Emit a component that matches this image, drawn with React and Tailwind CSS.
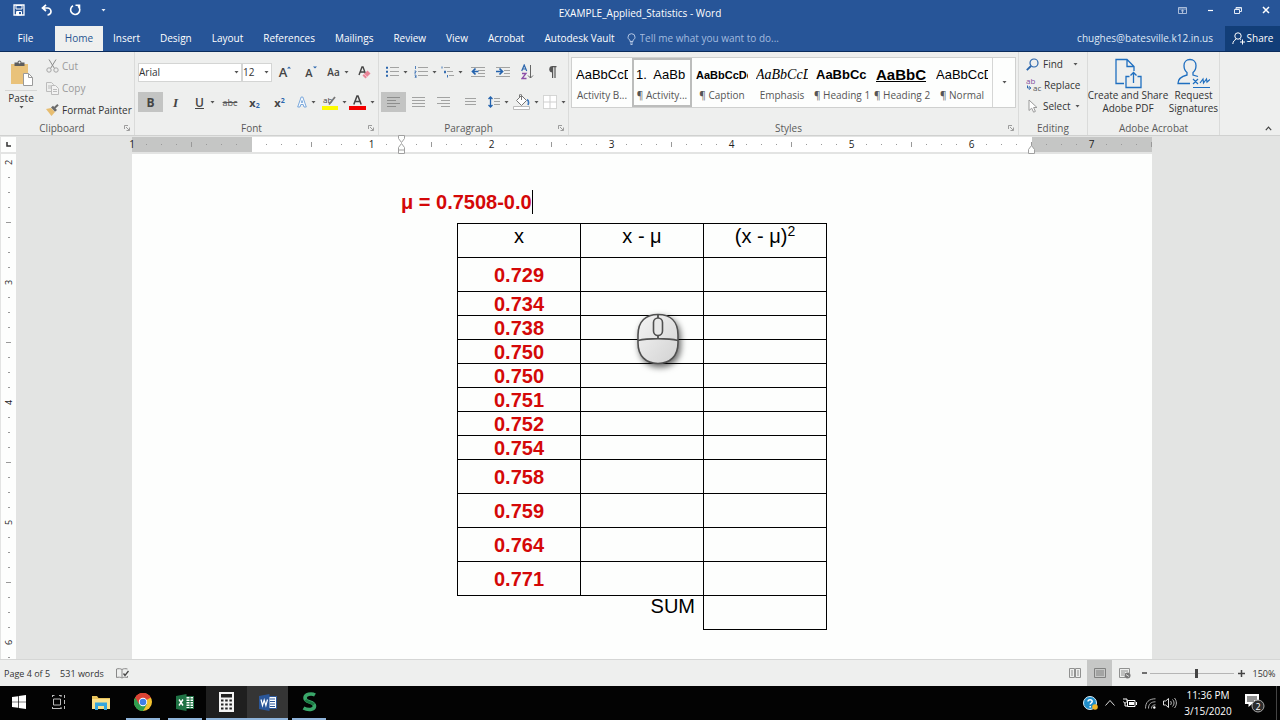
import { useState } from 'react'
import clsx from 'clsx'

const tabs = ['Insert', 'Design', 'Layout', 'References', 'Mailings', 'Review', 'View', 'Acrobat', 'Autodesk Vault']

const styleItems = [
  { name: 'Activity B...', sample: 'AaBbCcDd', cls: 'text-[13px]' },
  { name: '¶ Activity...', sample: '1.  AaBb', cls: 'text-[13px]' },
  { name: '¶ Caption', sample: 'AaBbCcDd', cls: 'text-[11px] font-bold' },
  { name: 'Emphasis', sample: 'AaBbCcDd', cls: "text-[14px] italic font-['Liberation_Serif',serif] text-[#444]" },
  { name: '¶ Heading 1', sample: 'AaBbCc', cls: 'text-[13px] font-bold' },
  { name: '¶ Heading 2', sample: 'AaBbC', cls: 'text-[15px] font-bold underline' },
  { name: '¶ Normal', sample: 'AaBbCcDd', cls: 'text-[13px]' },
]

const rows = [
  { x: '0.729', tall: true },
  { x: '0.734' },
  { x: '0.738' },
  { x: '0.750' },
  { x: '0.750' },
  { x: '0.751' },
  { x: '0.752' },
  { x: '0.754' },
  { x: '0.758', tall: true },
  { x: '0.759', tall: true },
  { x: '0.764', tall: true },
  { x: '0.771', tall: true },
]

function Svg({ w, h, children, className }) {
  return (
    <svg width={w} height={h} viewBox={`0 0 ${w} ${h}`} fill="none" className={clsx('shrink-0', className)} aria-hidden="true">
      {children}
    </svg>
  )
}

function Caret({ color = '#555' }) {
  return <Svg w={5} h={3}><path d="M0.5 0h4L2.5 2.5z" fill={color} /></Svg>
}

function Btn({ label, width = 'w-[25px]', active, caret, children }) {
  return (
    <button type="button" aria-label={label} className={clsx('flex h-5 shrink-0 items-center justify-center gap-1', width, active && 'bg-[#c3c4c3]')}>
      {children}
      {caret && <Caret />}
    </button>
  )
}

function Launcher() {
  return (
    <Svg w={6} h={6}>
      <path d="M0.5 4V0.5H4M2 2l3 3M5.5 2.5v3h-3" stroke="#888" strokeWidth="0.8" />
    </Svg>
  )
}

function Group({ label, width, launcher, children }) {
  return (
    <section aria-label={label} className={clsx('flex shrink-0 flex-col border-r border-[#dadbda]', width)}>
      <div className="flex-1">{children}</div>
      <div className="flex h-3.5 items-center px-1 text-[#5a5a5a]">
        <span className={clsx('flex-1 text-center', launcher && 'pr-1')}>{label}</span>
        {launcher && <Launcher />}
      </div>
    </section>
  )
}

/* horizontal text lines, as used on the list and alignment buttons */
function Lines({ spans, y0 = 1, step = 3, color = '#a2a3a2' }) {
  return (
    <>
      {spans.map(([a, b], i) => (
        <path key={i} d={`M${a} ${y0 + i * step + 0.5}H${b}`} stroke={color} />
      ))}
    </>
  )
}

function TitleBar() {
  return (
    <div className="grid h-[26px] grid-cols-[1fr_auto_1fr] items-center">
      <div className="flex items-center pb-1.5 pl-[5px]">
        <button type="button" aria-label="Save" className="flex w-7 justify-center">
          <Svg w={12} h={12}>
            <path d="M1 1h10v10H1z" stroke="#fff" strokeWidth="1.3" />
            <path d="M3 1.5h6V5H3zM3.5 7.5h5V11h-5z" stroke="#fff" />
            <path d="M4 8h2v3H4z" fill="#fff" />
          </Svg>
        </button>
        <button type="button" aria-label="Undo" className="flex w-7 justify-center">
          <Svg w={12} h={12}>
            <path d="M5 .8L1.500 4l3.500 3M2 4h4.500a3.300 3.300 0 010 7" stroke="#fff" strokeWidth="1.700" />
          </Svg>
        </button>
        <button type="button" aria-label="Repeat" className="flex w-7 justify-center">
          <Svg w={12} h={12}>
            <path d="M4 1.800a4.600 4.600 0 105 .4M6.500 1.200H10.500V5" stroke="#fff" strokeWidth="1.600" />
          </Svg>
        </button>
        <button type="button" aria-label="Customize toolbar" className="flex w-7 justify-center">
          <Caret color="#e8eef8" />
        </button>
      </div>
      <h1 className="text-white">EXAMPLE_Applied_Statistics - Word</h1>
      <div className="flex items-center justify-end pb-1.5">
        <button type="button" aria-label="Ribbon display options" className="flex w-7 justify-center">
          <Svg w={9} h={7}><path d="M.5.5h8v6h-8zM.5 2h8M4.5 6V3M3 4.3L4.5 3 6 4.3" stroke="#c9d6ea" strokeWidth="0.8" /></Svg>
        </button>
        <button type="button" aria-label="Minimize" className="flex w-7 justify-center">
          <Svg w={7} h={4}><path d="M1 2.500h5" stroke="#fff" strokeWidth="1.200" /></Svg>
        </button>
        <button type="button" aria-label="Restore" className="flex w-7 justify-center">
          <Svg w={8} h={7}><path d="M.5 2.500h5v4h-5zM2 2V.5h5.500v4H6M2 1h5" stroke="#e4ebf6" /></Svg>
        </button>
        <button type="button" aria-label="Close" className="flex w-7 justify-center">
          <Svg w={8} h={8}><path d="M1 1l6 6M7 1L1 7" stroke="#fff" strokeWidth="1.500" /></Svg>
        </button>
      </div>
    </div>
  )
}

function TabBar() {
  return (
    <nav className="flex h-[26px] items-stretch border-b border-[#0b2c5c] text-white">
      <button type="button" className="w-[55px] pr-1">File</button>
      <button type="button" className="w-12 bg-[#eff0ef] text-[#27548f]">Home</button>
      <div className="flex">
        {tabs.map((t) => <button key={t} type="button" className="px-2.5">{t}</button>)}
      </div>
      <label className="flex flex-1 items-center gap-1 pl-0.5">
        <Svg w={9} h={12}>
          <path d="M3 8.500V7.200C1.600 6.400 1 5.500 1 4.200a3.500 3.500 0 017 0c0 1.300-.6 2.200-2 3v1.300zM3 10h3M3.500 11.500h2" stroke="#b4c7e4" />
        </Svg>
        <input aria-label="Tell me" placeholder="Tell me what you want to do..." className="w-40 bg-transparent placeholder:text-[#a3bbdf] outline-none" />
      </label>
      <a href="#account" className="flex items-center pr-3 text-[#dfe8f5]">chughes@batesville.k12.in.us</a>
      <button type="button" className="flex w-[55px] items-center justify-center gap-0.5 bg-[#123e78]">
        <Svg w={13} h={13}>
          <circle cx="6" cy="4" r="3.200" stroke="#fff" />
          <path d="M.8 12c.2-2.500 1.600-4 3.400-4.800M7.800 7l1 .8M10.500 7.500v5M8 10h5" stroke="#fff" />
        </Svg>
        Share
      </button>
    </nav>
  )
}

function Clipboard() {
  return (
    <Group label="Clipboard" width="w-[135px]" launcher>
      <div className="flex pt-1">
        <button type="button" className="flex w-[42px] flex-col items-center pt-1">
          <Svg w={23} h={26}>
            <path d="M1 4h17v20H1z" fill="#e9c27a" />
            <path d="M4.500 2.500h3a2 2 0 014 0h3v3.500h-10z" fill="#5d5d5d" />
            <circle cx="9.500" cy="2.500" r="1" fill="#eee" />
            <path d="M13.500 13.500h5l4 4v8h-9z" fill="#fff" stroke="#9a9a9a" />
            <path d="M18.500 13.500v4h4" stroke="#9a9a9a" />
          </Svg>
          <span className="mt-1 w-8 border-t border-[#d5d6d5]">Paste</span>
          <Caret />
        </button>
        <div className="flex flex-col gap-0.5 pl-1">
          <button type="button" className="flex h-5 items-center gap-[3px] text-[#9a9a9a]">
            <Svg w={13} h={14}>
              <path d="M3 .5l5.500 9M10 .5L4.500 9.500" stroke="#8c8c8c" />
              <circle cx="3" cy="11" r="2.200" stroke="#a5a5a5" /><circle cx="10" cy="11" r="2.200" stroke="#a5a5a5" />
            </Svg>
            Cut
          </button>
          <button type="button" className="flex h-5 items-center gap-[3px] text-[#9a9a9a]">
            <Svg w={13} h={13}>
              <path d="M.5.500h5l2 2v7h-7zM2 4h3M2 6h3" stroke="#bcbcbc" />
              <path d="M5.500 3.500h4l3 3v6h-7z" fill="#f3f3f3" stroke="#bcbcbc" />
              <path d="M7 7.500h4M7 9.500h4" stroke="#bcbcbc" />
            </Svg>
            Copy
          </button>
          <button type="button" className="flex h-5 items-center gap-[3px] whitespace-nowrap">
            <Svg w={13} h={12}>
              <path d="M0 5l5-1 4 4-3.500 4z" fill="#e7bd70" />
              <path d="M5 3.500l2-1.800L11 6 9 7.800z" fill="#6a6a6a" />
              <path d="M8.500 4L12 .8" stroke="#6a6a6a" strokeWidth="2" />
            </Svg>
            Format Painter
          </button>
        </div>
      </div>
    </Group>
  )
}

function Combo({ label, value, options, width }) {
  const [v, setV] = useState(value)
  return (
    <div className={clsx('grid h-[19px] items-center border border-[#d4d5d4] bg-white', width)}>
      <select aria-label={label} value={v} onChange={(e) => setV(e.target.value)} className="col-start-1 row-start-1 w-full appearance-none bg-transparent outline-none">
        {options.map((o) => <option key={o}>{o}</option>)}
      </select>
      <span className="pointer-events-none col-start-1 row-start-1 justify-self-end pr-0.5"><Caret /></span>
    </div>
  )
}

function FontGroup() {
  return (
    <Group label="Font" width="w-[244px]" launcher>
      <div className="flex items-center pt-2.5 pl-[3px]">
        <Combo label="Font" value="Arial" options={['Arial', 'Calibri', 'Times New Roman']} width="w-[104px]" />
        <Combo label="Font size" value="12" options={['10', '11', '12', '14']} width="w-[30px]" />
        <Btn label="Grow font" width="w-[26px]">
          <span className="text-[13px] font-semibold text-[#444]">A</span>
          <Svg w={4} h={12} className="-ml-1"><path d="M0 2.500L2 .5l2 2z" fill="#2b66ad" /></Svg>
        </Btn>
        <Btn label="Shrink font" width="w-[26px]">
          <span className="text-[11px] font-semibold text-[#444]">A</span>
          <Svg w={4} h={12} className="-ml-1"><path d="M0 .5h4L2 2.500z" fill="#2b66ad" /></Svg>
        </Btn>
        <Btn label="Change case" width="w-7" caret><span className="font-semibold text-[#444]">Aa</span></Btn>
        <Btn label="Clear formatting">
          <Svg w={13} h={13}>
            <path d="M1 9L4 1h1l3 8M2 6h5" stroke="#444" strokeWidth="1.400" />
            <path d="M9.500 4.500l3 3-5 5-3-3z" fill="#ea8598" />
            <path d="M6.200 8l3 3" stroke="#f7c9d1" />
          </Svg>
        </Btn>
      </div>
      <div className="flex items-center pt-2.5 pl-[3px]">
        <Btn label="Bold" active><span className="text-[12px] font-bold text-[#444]">B</span></Btn>
        <Btn label="Italic"><span className="font-['Liberation_Serif',serif] text-[13px] font-bold italic text-[#444]">I</span></Btn>
        <Btn label="Underline" width="w-[30px]" caret><span className="pl-1 pr-0.5 text-[12px] font-semibold text-[#444] underline">U</span></Btn>
        <Btn label="Strikethrough" width="w-6"><span className="text-[9px] text-[#555] line-through">abc</span></Btn>
        <Btn label="Subscript"><span className="text-[11px] font-bold text-[#444]">x<sub className="text-[7px] text-[#2b66ad]">2</sub></span></Btn>
        <Btn label="Superscript"><span className="text-[11px] font-bold text-[#444]">x<sup className="text-[7px] text-[#2b66ad]">2</sup></span></Btn>
        <Btn label="Text effects" width="w-7" caret>
          <Svg w={10} h={12}><path d="M.7 11L4.200 1h1.600l3.500 10H7L6.200 8.500H3.800L3 11zM4.400 6.500h1.200L5 4.500z" stroke="#6d9fd8" strokeWidth="0.900" fill="#f7fbff" /></Svg>
        </Btn>
        <Btn label="Highlight color" width="w-7" caret>
          <Svg w={16} h={16}>
            <text x="1" y="9" fontSize="8" fill="#444">ab</text>
            <path d="M13 3L7 10.500" stroke="#777" strokeWidth="1.800" />
            <path d="M0 12h16v4H0z" fill="#fdfb00" />
          </Svg>
        </Btn>
        <Btn label="Font color" width="w-7" caret>
          <Svg w={17} h={16}>
            <path d="M4.800 10.500L8 2h1l3.200 8.500M6 7.500h5" stroke="#444" strokeWidth="1.500" />
            <path d="M0 12h17v4H0z" fill="#f40000" />
          </Svg>
        </Btn>
      </div>
    </Group>
  )
}

function ParagraphGroup() {
  const full = [[0, 13], [0, 13], [0, 13], [0, 13]]
  return (
    <Group label="Paragraph" width="w-[190px]" launcher>
      <div className="flex items-center pt-2.5 pl-1">
        <Btn label="Bullets" width="w-7" caret>
          <Svg w={13} h={12}>
            <Lines spans={[[4, 13], [4, 13], [4, 13]]} step={4} />
            <path d="M0 .7h2v2H0zM0 4.700h2v2H0zM0 8.700h2v2H0z" fill="#2b66ad" />
          </Svg>
        </Btn>
        <Btn label="Numbering" width="w-7" caret>
          <Svg w={14} h={12}>
            <Lines spans={[[4, 14], [4, 14], [4, 14]]} step={4} />
            <path d="M1.500 0v3M.5 5h1.500v1L.5 7H2M.5 9H2v3H.5M1 10.500h1" stroke="#2b66ad" strokeWidth="0.800" />
          </Svg>
        </Btn>
        <Btn label="Multilevel list" width="w-[26px]" caret>
          <Svg w={13} h={12}>
            <Lines spans={[[3, 9], [6, 12], [8, 13]]} step={4} />
            <path d="M1 .5v2M3.500 5h1v2h-1zM6.500 9v2.500" stroke="#2b66ad" strokeWidth="0.900" />
          </Svg>
        </Btn>
        <Btn label="Decrease indent">
          <Svg w={14} h={12}>
            <Lines spans={[[0, 14], [7, 14], [7, 14], [0, 14]]} />
            <path d="M7.500 5.500H2M4.500 2.500l-3 3 3 3" stroke="#2362ad" strokeWidth="1.700" />
          </Svg>
        </Btn>
        <Btn label="Increase indent">
          <Svg w={14} h={12}>
            <Lines spans={[[0, 14], [8, 14], [8, 14], [0, 14]]} />
            <path d="M0 5.500h5.500M3.500 2.500l3 3-3 3" stroke="#2362ad" strokeWidth="1.700" />
          </Svg>
        </Btn>
        <Btn label="Sort">
          <Svg w={13} h={16}>
            <path d="M.7 7L3.200 1l2.500 6M1.500 5h3.400" stroke="#2b66ad" strokeWidth="1.200" />
            <path d="M1 9.500h4L1 14.500h4.500" stroke="#8c4fa8" strokeWidth="1.300" />
            <path d="M9.500 1v13M7 11.500L9.500 14l2.500-2.500" stroke="#666" />
          </Svg>
        </Btn>
        <Btn label="Show paragraph marks">
          <Svg w={9} h={12}>
            <path d="M4.500 0a3.200 3.200 0 000 6.400z" fill="#555" />
            <path d="M4 .6h4.500M4.600 0v12M7 0v12" stroke="#555" strokeWidth="1.200" />
          </Svg>
        </Btn>
      </div>
      <div className="flex items-center pt-2.5 pl-0.5">
        <Btn label="Align left" active><Svg w={13} h={12}><Lines spans={[[0, 13], [0, 9], [0, 13], [0, 9]]} color="#8d8e8d" /></Svg></Btn>
        <Btn label="Center"><Svg w={13} h={12}><Lines spans={full} /></Svg></Btn>
        <Btn label="Align right"><Svg w={13} h={12}><Lines spans={[[0, 13], [4, 13], [0, 13], [4, 13]]} /></Svg></Btn>
        <Btn label="Justify" width="w-7"><Svg w={11} h={8}><Lines spans={[[0, 11], [0, 11], [0, 11]]} step={3} y0={0} /></Svg></Btn>
        <Btn label="Line spacing" width="w-7" caret>
          <Svg w={12} h={12}>
            <Lines spans={[[6, 12], [6, 12], [6, 12]]} y0={2} />
            <path d="M2.500 1v10M.5 3l2-2 2 2M.5 9l2 2 2-2" stroke="#2362ad" strokeWidth="1.300" />
          </Svg>
        </Btn>
        <Btn label="Shading" width="w-7" caret>
          <Svg w={17} h={16}>
            <path d="M8.500 1.500l5 5-5 5-5-5z" fill="#fff" stroke="#777" />
            <path d="M8.500 6V1c0-1-2-1-2 0v2.500" stroke="#777" />
            <path d="M14 5.500c1.500 1 2 3 1 5.500" stroke="#3f79bd" strokeWidth="1.600" />
            <path d="M.5 12.500h16v3H.5z" fill="#fff" stroke="#bbb" />
          </Svg>
        </Btn>
        <Btn label="Borders" width="w-7" caret>
          <Svg w={14} h={14}>
            <path d="M.5.500h13v13H.5z" fill="#fff" stroke="#b5b5b5" strokeDasharray="1 1" />
            <path d="M7 0v14M0 7h14" stroke="#cfcfcf" />
          </Svg>
        </Btn>
      </div>
    </Group>
  )
}

function StylesGroup() {
  const [selected, setSelected] = useState(1)
  return (
    <Group label="Styles" width="min-w-[450px] flex-1" launcher>
      <div className="mx-0.5 mt-[5px] flex h-[51px] border border-[#cfd0cf] bg-[#fdfefd]">
        {styleItems.map((s, i) => (
          <button
            key={s.name}
            type="button"
            onClick={() => setSelected(i)}
            className={clsx('flex min-w-[60px] flex-1 flex-col items-center gap-0.5 border-2 pt-1 whitespace-nowrap', selected === i ? 'border-[#bcbdbc]' : 'border-transparent')}
          >
            <span className={clsx("h-[22px] w-[52px] shrink-0 overflow-hidden text-left font-['Liberation_Sans',sans-serif] leading-[22px] whitespace-pre text-black", s.cls)}>{s.sample}</span>
            <span className="text-[#555]">{s.name}</span>
          </button>
        ))}
        <button type="button" aria-label="More styles" className="flex w-[23px] shrink-0 items-center justify-center border-l border-[#d5d6d5]">
          <Caret />
        </button>
      </div>
    </Group>
  )
}

function EditingGroup() {
  return (
    <Group label="Editing" width="w-[69px]">
      <div className="flex flex-col gap-px pt-0.5 pl-[7px]">
        <button type="button" className="flex h-5 items-center gap-1">
          <Svg w={13} h={13}>
            <circle cx="8" cy="5" r="4" stroke="#2b66ad" strokeWidth="1.200" />
            <path d="M5 8L.8 12.200" stroke="#2b66ad" strokeWidth="1.800" />
          </Svg>
          Find
          <span className="pl-1.5"><Caret /></span>
        </button>
        <button type="button" className="flex h-5 items-center gap-0.5">
          <Svg w={16} h={16}>
            <text x="0" y="7" fontSize="8" fill="#8450a0">ab</text>
            <text x="7" y="14" fontSize="8" fill="#555">ac</text>
            <path d="M1.500 8.500v2.500h3M3 9.200L4.800 11 3 12.800" stroke="#2b66ad" />
          </Svg>
          Replace
        </button>
        <button type="button" className="flex h-5 items-center gap-1">
          <span className="flex w-[13px] justify-center">
            <Svg w={10} h={14}><path d="M1 1v10.500l2.700-2.300 1.900 4 1.800-.8-1.800-3.900H9z" fill="#fff" stroke="#9a9a9a" /></Svg>
          </span>
          Select
          <Caret />
        </button>
      </div>
    </Group>
  )
}

function AcrobatGroup() {
  return (
    <Group label="Adobe Acrobat" width="w-[132px]">
      <div className="flex justify-center pt-1.5 leading-[13px]">
        <button type="button" className="flex w-20 flex-col items-center whitespace-nowrap">
          <Svg w={27} h={31}>
            <path d="M9 25.500H1V1.500h11l7 7V13M12 1.500v7h7" stroke="#1f6fc0" strokeWidth="1.300" />
            <path d="M14.500 18.500H11v11h15v-11h-3.500M18.500 25V14.500M15.500 17.500l3-3 3 3" stroke="#1f6fc0" strokeWidth="1.300" />
          </Svg>
          <span>Create and Share</span>
          <span>Adobe PDF</span>
        </button>
        <button type="button" className="flex w-[52px] flex-col items-center">
          <Svg w={33} h={31}>
            <path d="M13 25.500H1c0-5 3-7 9-8.500v-2.500C7.500 12.500 7 10 7 7.500 7 4 9.500 1.500 13 1.500S19 4 19 7.500c0 2.500-.5 5-3 7V17l5 1.500" stroke="#1f6fc0" strokeWidth="1.300" />
            <path d="M16 21l5 5M21 21l-5 5M23 25l3-4 .5 4 3-4 .5 3 3-2.500M16 29.500h17" stroke="#1f6fc0" strokeWidth="1.200" />
          </Svg>
          <span>Request</span>
          <span>Signatures</span>
        </button>
      </div>
    </Group>
  )
}

/* eighth-inch marks: 0 is a number, 4 is the half-inch line, the rest are dots */
function HorizontalRuler() {
  const cells = Array.from({ length: 68 }, (_, i) => i + 1)
  return (
    <div className="relative mx-auto flex h-[15px] w-[1020px] bg-white">
      <span className="relative flex w-0 justify-center text-[#222]">1</span>
      {cells.map((n) => {
        const margin = n <= 8 || n > 60
        const inch = n / 8 - 1
        return (
          <span key={n} className={clsx('flex flex-1 items-center justify-end', margin && 'bg-[#c5c6c5]')}>
            <span className="relative flex w-px justify-center text-[#222]">
              {n % 8 === 0 ? (inch > 0 && inch) : <span className={clsx('w-px shrink-0 bg-[#999]', n % 8 === 4 ? 'h-[5px]' : 'h-px')} />}
            </span>
          </span>
        )
      })}
      <span className="absolute -top-0.5 left-[265px]">
        <Svg w={9} h={19}>
          <path d="M1.500.500h6v3l-3 4-3-4zM1.500 18.500v-6l3-4 3 4v6zM1.500 15h6" fill="#fdfefd" stroke="#a0a0a0" />
        </Svg>
      </span>
      <span className="absolute top-2 left-[895px]">
        <Svg w={9} h={9}><path d="M1.500 8.500v-4l3-4 3 4v4z" fill="#fdfefd" stroke="#a0a0a0" /></Svg>
      </span>
    </div>
  )
}

function VerticalRuler() {
  const cells = Array.from({ length: 34 }, (_, i) => i)
  return (
    <div className="ml-px flex w-[15px] shrink-0 flex-col overflow-hidden bg-[#fdfefd]">
      {cells.map((n) => (
        <span key={n} className={clsx('flex shrink-0 flex-col items-center justify-end', n === 0 ? 'h-[9px]' : 'h-[15px]')}>
          <span className="flex h-px items-center text-[9px] text-[#222]">
            {n % 8 === 0 ? <span className="-rotate-90">{n / 8 + 2}</span> : <span className={clsx('h-px bg-[#999]', n % 8 === 4 ? 'w-[5px]' : 'w-0.5')} />}
          </span>
        </span>
      ))}
    </div>
  )
}

function MouseIndicator() {
  return (
    <span className="absolute top-[159px] left-[504px] drop-shadow-[2px_3px_3px_rgba(0,0,0,0.6)]">
      <Svg w={44} h={52}>
        <defs>
          <linearGradient id="mouse" x1="0" y1="0" x2="1" y2="1">
            <stop offset="0" stopColor="#f4f4f4" />
            <stop offset="1" stopColor="#d2d2d2" />
          </linearGradient>
        </defs>
        <path d="M2 22C2 8 10 1.500 22 1.500S42 8 42 22v8C42 43 34 50.500 22 50.500S2 43 2 30z" fill="url(#mouse)" stroke="#505050" strokeWidth="1.600" />
        <path d="M2 27.500c10-2.500 30-2.500 40 0M22 1.500V5M22 22.500V25.500" stroke="#505050" strokeWidth="1.800" />
        <rect x="17.500" y="5" width="9" height="17.500" rx="4.500" fill="#e8e8e8" stroke="#505050" strokeWidth="1.600" />
      </Svg>
    </span>
  )
}

function Page() {
  const cell = 'border border-black p-0'
  return (
    <main className="relative mx-auto w-[1020px] overflow-hidden bg-[#fdfefd] font-['Liberation_Sans',Arial,sans-serif] text-[20px] leading-6 text-black">
      <p className="mt-9 ml-[269px] flex font-bold text-[#d40808]">
        μ = 0.7508-0.0<span className="w-px bg-black" />
      </p>
      <table className="mt-[9px] ml-[325px] w-[370px] table-fixed border-collapse text-center">
        <thead>
          <tr className="h-[34px] align-top">
            <th className={clsx(cell, 'font-normal')}>x</th>
            <th className={clsx(cell, 'font-normal')}>x - μ</th>
            <th className={clsx(cell, 'font-normal')}>(x - μ)<sup className="text-[14px]">2</sup></th>
          </tr>
        </thead>
        <tbody>
          {rows.map((r, i) => (
            <tr key={i} className={r.tall ? 'h-[34px]' : 'h-6'}>
              <td className={clsx(cell, 'leading-5 font-bold text-[#d40808]')}>{r.x}</td>
              <td className={cell} />
              <td className={cell} />
            </tr>
          ))}
          <tr className="h-[34px] align-top">
            <td />
            <td className="p-0 pr-2 text-right leading-5">SUM</td>
            <td className={cell} />
          </tr>
        </tbody>
      </table>
      <MouseIndicator />
    </main>
  )
}

function StatusBar() {
  const [zoom, setZoom] = useState(55)
  return (
    <footer className="flex h-[27px] shrink-0 items-center border-t border-[#d5d6d5] bg-[#eeefee] text-[9px] text-[#333]">
      <span className="pl-1">Page 4 of 5</span>
      <span className="pl-2.5">531 words</span>
      <button type="button" aria-label="Proofing" className="ml-3">
        <Svg w={13} h={11}>
          <path d="M6 1.500v8M6 1.500C4.500.5 2.500.5.500 1v8.500c2-.5 4-.5 5.500.5 1.500-1 3.500-1 5.500-.5V8M6 1.500C7.500.5 9.500.5 11.500 1" stroke="#888" />
          <path d="M7.500 5.500l1.500 2L12.500 3" stroke="#444" strokeWidth="1.300" />
        </Svg>
      </button>
      <div className="ml-auto flex h-full items-center">
        <button type="button" aria-label="Read mode" className="flex w-[25px] justify-center">
          <Svg w={12} h={10}><path d="M.5.500h5v9h-5zM6.500.500h5v9h-5zM2 3h2M2 5h2M2 7h2M8 3h2M8 5h2M8 7h2" stroke="#909190" /></Svg>
        </button>
        <button type="button" aria-label="Print layout" className="flex h-full w-[25px] items-center justify-center bg-[#c6c7c6]">
          <Svg w={12} h={10}><path d="M.5.500h11v9H.5zM2 3h8M2 5h8M2 7h8" stroke="#808180" /></Svg>
        </button>
        <button type="button" aria-label="Web layout" className="flex w-[26px] justify-center">
          <Svg w={12} h={11}>
            <path d="M6 9.500H.5v-9h10V5M2 3h7M2 5h4M2 7h3" stroke="#909190" />
            <circle cx="8.500" cy="7.500" r="3" fill="#777" /><path d="M7 6.500l3 2" stroke="#ddd" />
          </Svg>
        </button>
        <button type="button" aria-label="Zoom out" className="flex w-3 justify-center">
          <Svg w={5} h={2}><path d="M0 1h5" stroke="#444" strokeWidth="1.500" /></Svg>
        </button>
        <input
          type="range"
          aria-label="Zoom"
          value={zoom}
          onChange={(e) => setZoom(Number(e.target.value))}
          className="h-3 w-[84px] appearance-none bg-[linear-gradient(#b5b5b5,#b5b5b5)] bg-[length:100%_1px] bg-center bg-no-repeat [&::-webkit-slider-thumb]:h-[9px] [&::-webkit-slider-thumb]:w-[3px] [&::-webkit-slider-thumb]:appearance-none [&::-webkit-slider-thumb]:bg-[#444]"
        />
        <button type="button" aria-label="Zoom in" className="flex w-3.5 justify-center">
          <Svg w={7} h={7}><path d="M0 3.500h7M3.500 0v7" stroke="#444" strokeWidth="1.500" /></Svg>
        </button>
        <span className="w-8 text-center">150%</span>
      </div>
    </footer>
  )
}

function Task({ label, width = 'w-[42px]', bg, line, children }) {
  return (
    <button type="button" aria-label={label} className={clsx('flex flex-col items-center', width, bg)}>
      <span className="flex flex-1 items-center">{children}</span>
      <span className={clsx('h-0.5', line === 'full' ? 'w-full bg-[#8fb4da]' : 'w-[34px]', line === 'short' && 'bg-[#8fb4da]')} />
    </button>
  )
}

function Taskbar() {
  return (
    <div className="flex h-[34px] shrink-0 bg-[#030303] text-white">
      <Task label="Start" width="w-[38px]">
        <Svg w={14} h={14}><path d="M0 2l6-.8v5.500H0zM6.700 1.100L14 0v6.700H6.700zM0 7.300h6v5.500L0 12zM6.700 7.300H14V14l-7.300-1.100z" fill="#fff" /></Svg>
      </Task>
      <Task label="Task View">
        <Svg w={14} h={14}><path d="M0 .5h2.500M7 .5h2.500M.5 0v2M9 0v2M1.500 4h7v6h-7zM.5 14v-2M9 14v-2M0 13.500h9.500M12.500 0v3M12.500 5v4M12.500 11v3" stroke="#bbb" /></Svg>
      </Task>
      <Task label="File Explorer">
        <Svg w={18} h={15}>
          <path d="M0 1h5l1.500 2H18v11H0z" fill="#e9c45c" />
          <path d="M0 4h18v10H0z" fill="#fbe08a" />
          <path d="M3 15V7.500h12V15h-3v-4H6v4z" fill="#35a5dd" />
        </Svg>
      </Task>
      <Task label="Chrome" line="short">
        <Svg w={18} h={18}>
          <circle cx="9" cy="9" r="9" fill="#f2c230" />
          <path d="M9 9L1.200 4.500A9 9 0 0116.800 4.500z" fill="#dc4335" />
          <path d="M1.200 4.500A9 9 0 009 18l3.900-6.800L9 9z" fill="#2f9e50" />
          <path d="M9 5h7.900a9 9 0 00-15.700-.5L5 11z" fill="#dc4335" />
          <circle cx="9" cy="9" r="4.200" fill="#fff" /><circle cx="9" cy="9" r="3.300" fill="#3f7fe8" />
        </Svg>
      </Task>
      <Task label="Excel" line="short">
        <Svg w={18} h={17}>
          <path d="M9.500 2.500h8v12h-8z" fill="#fff" stroke="#1f7244" />
          <path d="M10 5h7M10 7.500h7M10 10h7M10 12.500h7M14 3v11" stroke="#1f7244" />
          <path d="M0 2l10.500-2v17L0 15z" fill="#1f7244" />
          <path d="M3 5.500l4 6M7 5.500l-4 6" stroke="#fff" strokeWidth="1.400" />
        </Svg>
      </Task>
      <Task label="Calculator" width="w-[41px]" bg="bg-[#1f1f1f]" line="full">
        <Svg w={15} h={20}>
          <path d="M0 0h15v20H0z" fill="#f4f4f4" />
          <path d="M2 2h11v3.500H2z" fill="#222" />
          <path d="M2 8.500h11M2 12.500h11M2 16.500h11" stroke="#222" strokeWidth="2" strokeDasharray="2.500 1.700" />
        </Svg>
      </Task>
      <Task label="Word" width="w-[41px]" bg="bg-[#353535]" line="full">
        <Svg w={18} h={17}>
          <path d="M9.500 2.500h8v12h-8z" fill="#fff" stroke="#2b579a" />
          <path d="M11 5h5M11 7.500h5M11 10h5M11 12.500h5" stroke="#2b579a" />
          <path d="M0 2l10.500-2v17L0 15z" fill="#2b579a" />
          <path d="M2 5.500l1.500 6 1.700-5.500 1.700 5.500 1.600-6" stroke="#fff" strokeWidth="1.200" />
        </Svg>
      </Task>
      <Task label="Snagit" line="short">
        <Svg w={15} h={20}>
          <path d="M13 3C9.500 1 3 2 3 6c0 5 9.500 3 9.500 8 0 4-6.500 4.500-11 2" stroke="#3aa76a" strokeWidth="3.600" />
          <path d="M3.500 8c2 2.500 7 2.500 8.500 4.500" stroke="#1c7a43" strokeWidth="2.500" />
        </Svg>
      </Task>

      <div className="ml-auto flex items-center">
        <button type="button" aria-label="Help" className="flex w-5 justify-center">
          <Svg w={15} h={14}>
            <circle cx="7" cy="7" r="6.500" fill="#1f8dc9" stroke="#d8eefa" />
            <path d="M5 5.500c0-2.500 4.200-2.500 4.200 0C9.200 7 7.200 7 7.200 8.500M7.200 10v1.500" stroke="#fff" strokeWidth="1.500" />
            <circle cx="12" cy="11" r="2.800" fill="#f0b428" />
          </Svg>
        </button>
        <button type="button" aria-label="Show hidden icons" className="flex w-5 justify-center">
          <Svg w={10} h={6}><path d="M.5 5.500l4.500-5 4.500 5" stroke="#ddd" /></Svg>
        </button>
        <button type="button" aria-label="Battery" className="flex w-5 justify-center">
          <Svg w={14} h={10}>
            <path d="M4.500 2.500h7.500v6H4.500z" stroke="#fff" /><path d="M6 4h5v3H6z" fill="#fff" />
            <path d="M13.500 4v3M0 1h4v2.500L2.500 5H1.500L.5 3.500M2 5v3h2.500" stroke="#fff" />
          </Svg>
        </button>
        <button type="button" aria-label="Wi-Fi" className="flex w-5 justify-center">
          <Svg w={11} h={11}>
            <path d="M.5 10.500C.5 4 4 .8 10.500.800M3.500 10.500c0-4.500 2.500-6.700 7-6.700M6.500 10.500c0-2.500 1.500-3.700 4-3.700" stroke="#aaa" />
            <circle cx="9.300" cy="9.500" r="1.200" fill="#fff" />
          </Svg>
        </button>
        <button type="button" aria-label="Volume" className="flex w-5 justify-center">
          <Svg w={14} h={12}>
            <path d="M.5 4h2.200L5.500 1.500v9L2.700 8H.5z" stroke="#ddd" />
            <path d="M7.500 4c1 1 1 3 0 4M9.500 2.500c2 2 2 5 0 7M11.500 1c2.500 3 2.500 7 0 10" stroke="#bbb" />
          </Svg>
        </button>
        <button type="button" className="flex w-14 flex-col items-center leading-4">
          <span>11:36 PM</span>
          <span>3/15/2020</span>
        </button>
        <button type="button" aria-label="2 notifications" className="flex w-9 justify-center">
          <Svg w={21} h={20}>
            <path d="M1 1h14v10H8l-3.500 3v-3H1z" fill="#fff" />
            <path d="M3 4h10M3 6h10M3 8h7" stroke="#222" />
            <circle cx="14" cy="13" r="6" fill="#2c2c2c" stroke="#aaa" />
            <text x="11.500" y="16.500" fontSize="9" fill="#fff">2</text>
          </Svg>
        </button>
        <span className="ml-1 h-full w-1 border-l border-[#444]" />
      </div>
    </div>
  )
}

export default function App() {
  return (
    <div className="flex h-screen flex-col overflow-hidden bg-[#e3e4e3] font-['Open_Sans','Noto_Sans',sans-serif] text-[10px] leading-[15px] text-[#333]">
      <header className="shrink-0 bg-[#275598]">
        <TitleBar />
        <TabBar />
      </header>
      <div className="flex h-[84px] shrink-0 border-b border-[#d0d1d0] bg-[#eeefee]">
        <Clipboard />
        <FontGroup />
        <ParagraphGroup />
        <StylesGroup />
        <EditingGroup />
        <AcrobatGroup />
        <div className="flex w-[60px] shrink-0 items-end justify-end px-1">
          <button type="button" aria-label="Collapse the ribbon" className="p-1">
            <Svg w={7} h={5}><path d="M.8 4.200l2.700-3 2.700 3" stroke="#444" strokeWidth="1.200" /></Svg>
          </button>
        </div>
      </div>
      <div className="flex shrink-0 pt-px pr-3 pb-0.5">
        <button type="button" aria-label="Tab stop" className="ml-px flex h-[15px] w-[15px] items-center justify-center bg-[#fdfefd]">
          <Svg w={5} h={5}><path d="M1 0v4h4" stroke="#333" strokeWidth="1.500" /></Svg>
        </button>
        <HorizontalRuler />
      </div>
      <div className="flex min-h-0 flex-1 pr-3">
        <VerticalRuler />
        <Page />
      </div>
      <StatusBar />
      <Taskbar />
    </div>
  )
}
